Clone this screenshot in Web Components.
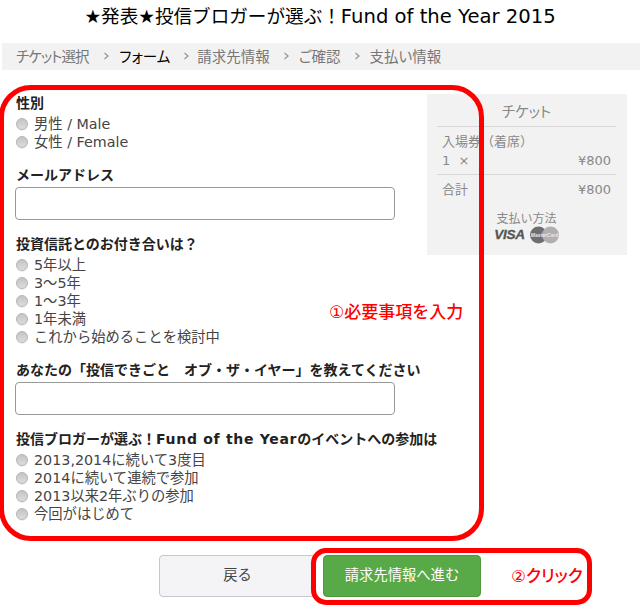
<!DOCTYPE html>
<html lang="ja">
<head>
<meta charset="utf-8">
<title>Fund of the Year 2015</title>
<style>
html, body { margin: 0; padding: 0; background: #fff; }
body {
  width: 640px;
  height: 615px;
  overflow: hidden;
  position: relative;
  font-family: "DejaVu Sans", "Noto Sans CJK JP", sans-serif;
  font-size: 14px;
  color: #333;
}
</style>
</head>
<body>
<event-title>★発表★投信ブロガーが選ぶ！<span>Fund of the Year 2015</span></event-title>
<step-bar steps="チケット選択,フォーム,請求先情報,ご確認,支払い情報" current="1"></step-bar>
<checkout-layout>
  <div slot="form">
    <radio-group label="性別" name="sex" options="男性 / Male|女性 / Female"></radio-group>
    <text-field label="メールアドレス" gap="16"></text-field>
    <radio-group label="投資信託とのお付き合いは？" name="years" gap="15" options="5年以上|3～5年|1～3年|1年未満|これから始めることを検討中"></radio-group>
    <text-field label="あなたの「投信できごと　オブ・ザ・イヤー」を教えてください" gap="16"></text-field>
    <radio-group label="投信ブロガーが選ぶ！&lt;span style=&quot;letter-spacing:.7px&quot;&gt;Fund of the Year&lt;/span&gt;のイベントへの参加は" name="join" gap="15" options="2013,2014に続いて3度目|2014に続いて連続で参加|2013以来2年ぶりの参加|今回がはじめて"></radio-group>
  </div>
  <ticket-summary slot="side"></ticket-summary>
</checkout-layout>
<button-row>
  <page-button>戻る</page-button>
  <page-button kind="primary">請求先情報へ進む</page-button>
</button-row>
<note-box x="-1" y="85" w="485" h="456" r="32">
  <span style="left:325px;top:212px;font-size:17px">①必要事項を入力</span>
</note-box>
<note-box x="311" y="548" w="281" h="57" r="15">
  <span style="left:195px;top:13px;font-feature-settings:'palt'">②クリック</span>
</note-box>

<script>
const base = `
  :host { box-sizing: border-box; }
  * { box-sizing: border-box; }
`;

class EventTitle extends HTMLElement {
  constructor() {
    super();
    this.attachShadow({ mode: "open" }).innerHTML = `<style>${base}
      :host { display: block; height: 43px; padding-top: 3px; text-align: center; font-size: 18.6px; line-height: 27px; color: #000; }
      ::slotted(span) { font-size: 19.6px; }
    </style><slot></slot>`;
  }
}

class StepBar extends HTMLElement {
  connectedCallback() {
    const steps = this.getAttribute("steps").split(",");
    const current = +this.getAttribute("current");
    const items = steps.map((s, i) => `<span class="${i === current ? "on" : ""}">${s}</span>`)
      .join(`<svg width="5" height="8" viewBox="0 0 5 8"><path d="M.5 1l3.5 3-3.5 3" fill="none" stroke="#999" stroke-width="1.3"/></svg>`);
    this.attachShadow({ mode: "open" }).innerHTML = `<style>${base}
      :host { display: flex; align-items: center; margin-left: 2px; height: 27px; padding: 0 0 3px 14px; background: #f2f2f2; color: #777; font-size: 14.5px; font-feature-settings: "palt"; }
      .on { color: #000; }
      span:nth-of-type(1) { letter-spacing: -1px; margin-right: 2px; }
      span:nth-of-type(3) { margin-left: -2px; }
      svg { margin: 2px 10px 0 14px; flex: none; }
    </style>${items}`;
  }
}

class CheckoutLayout extends HTMLElement {
  constructor() {
    super();
    this.attachShadow({ mode: "open" }).innerHTML = `<style>${base}
      :host { display: flex; align-items: flex-start; padding: 24px 13px 0 15px; height: 485px; }
      .form { flex: 0 0 397px; min-width: 0; margin-right: 15px; }
      .side { flex: 0 0 200px; }
    </style><div class="form"><slot name="form"></slot></div><div class="side"><slot name="side"></slot></div>`;
  }
}

class RadioGroup extends HTMLElement {
  connectedCallback() {
    const name = this.getAttribute("name");
    const rows = this.getAttribute("options").split("|").map((o) =>
      `<label><input type="radio" name="${name}"><span>${o}</span></label>`).join("");
    this.attachShadow({ mode: "open" }).innerHTML = `<style>${base}
      :host { display: block; margin-top: ${this.getAttribute("gap") || 0}px; }
      h4 { margin: 0 0 2px; padding-left: 1px; font-size: 14px; line-height: 18px; font-weight: 700; color: #222; white-space: nowrap; }
      label { display: flex; align-items: center; height: 18px; color: #444; font-size: 14.3px; white-space: nowrap; }
      label span { margin-top: -1px; }
      input { appearance: none; width: 12px; height: 12px; margin: 2px 6px 0 1px; border-radius: 50%; border: 1px solid #b5b5b5;
        background: linear-gradient(#c4c4c4, #dcdcdc); box-shadow: 0 1px 0 #eee; }
    </style><h4>${this.getAttribute("label")}</h4>${rows}`;
  }
}

class TextField extends HTMLElement {
  connectedCallback() {
    this.attachShadow({ mode: "open" }).innerHTML = `<style>${base}
      :host { display: block; margin-top: ${this.getAttribute("gap") || 0}px; }
      h4 { margin: 0 0 3px; padding-left: 1px; font-size: 14px; line-height: 18px; font-weight: 700; color: #222; white-space: nowrap; }
      input { display: block; width: 380px; height: 33px; margin: 0; padding: 0 8px; border: 1px solid #999; border-radius: 4px; background: #fff; }
    </style><h4>${this.getAttribute("label")}</h4><input type="text">`;
  }
}

class TicketSummary extends HTMLElement {
  constructor() {
    super();
    this.attachShadow({ mode: "open" }).innerHTML = `<style>${base}
      :host { display: block; width: 200px; height: 161px; padding: 8px 11px 0 10px; background: #f2f2f2; color: #888; font-size: 13px; }
      .head { height: 25px; border-bottom: 1px solid #d8d8d8; text-align: center; line-height: 21px; font-size: 14.5px; font-feature-settings: "palt"; }
      .row { display: flex; justify-content: space-between; padding: 0 5px; height: 19px; line-height: 19px; }
      .top { margin-top: 5px; }
      .item { height: 48px; padding-top: 5px; border-bottom: 1px solid #d8d8d8; }
      .pay { margin-top: 11px; text-align: center; line-height: 18px; font-size: 12px; }
      .icons { display: flex; justify-content: center; align-items: center; gap: 5px; margin-top: -2px; }
      .visa { font: italic 700 13.5px/18px "Liberation Sans", sans-serif; color: #555; letter-spacing: -.2px; -webkit-text-stroke: .3px #555; }
      svg { display: block; }
    </style>
    <div class="head">チケット</div>
    <div class="item">
      <div class="row">入場券（着席）</div>
      <div class="row"><span>1 &nbsp;×</span><span>¥800</span></div>
    </div>
    <div class="row top"><span>合計</span><span>¥800</span></div>
    <div class="pay">支払い方法</div>
    <div class="icons">
      <span class="visa">VISA</span>
      <svg width="29" height="18" viewBox="0 0 29 18">
        <circle cx="8.5" cy="9" r="8.5" fill="#6e6e6e"/>
        <circle cx="20.5" cy="9" r="8.5" fill="#b0b0b0"/>
        <text x="14.5" y="11" text-anchor="middle" font-family="Liberation Sans" font-size="5" font-style="italic" font-weight="700" fill="#e8e8e8">MasterCard</text>
      </svg>
    </div>`;
  }
}

class ButtonRow extends HTMLElement {
  constructor() {
    super();
    this.attachShadow({ mode: "open" }).innerHTML = `<style>${base}
      :host { display: flex; gap: 7px; padding-left: 159px; height: 42px; }
    </style><slot></slot>`;
  }
}

class PageButton extends HTMLElement {
  constructor() {
    super();
    this.attachShadow({ mode: "open" }).innerHTML = `<style>${base}
      :host { display: flex; align-items: center; justify-content: center; width: 157px; height: 42px; padding-bottom: 5px; border: 1px solid #c6c6cf; border-radius: 4px; background: #f4f4f6; color: #444; font-size: 14.3px; }
      :host([kind="primary"]) { width: 158px; background: #58a947; border-color: #4f9a40; color: #fff; }
    </style><slot></slot>`;
  }
}

class NoteBox extends HTMLElement {
  connectedCallback() {
    const a = (n) => this.getAttribute(n);
    this.attachShadow({ mode: "open" }).innerHTML = `<style>${base}
      :host { position: absolute; left: ${a("x")}px; top: ${a("y")}px; width: ${a("w")}px; height: ${a("h")}px; border: 5px solid #f00; border-radius: ${a("r")}px; }
      ::slotted(span) { position: absolute; white-space: nowrap; font-size: 16.7px; line-height: 20px; font-weight: 500; color: #f00; }
    </style><slot></slot>`;
  }
}

customElements.define("event-title", EventTitle);
customElements.define("step-bar", StepBar);
customElements.define("checkout-layout", CheckoutLayout);
customElements.define("radio-group", RadioGroup);
customElements.define("text-field", TextField);
customElements.define("ticket-summary", TicketSummary);
customElements.define("button-row", ButtonRow);
customElements.define("page-button", PageButton);
customElements.define("note-box", NoteBox);
</script>
</body>
</html>
